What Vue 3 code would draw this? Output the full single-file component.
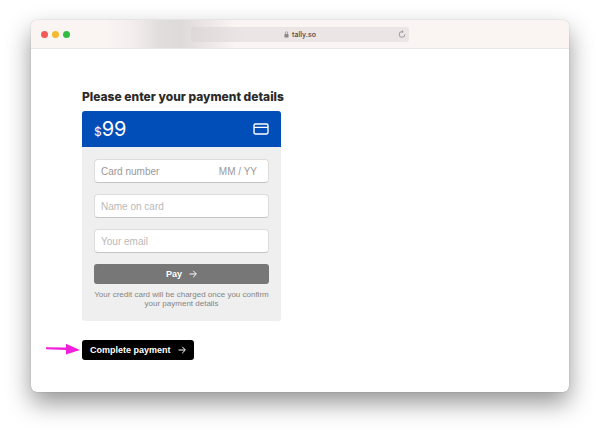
<template>
    <div class="desktop">
        <div class="window">
            <header class="titlebar">
                <div class="lights">
                    <span class="light red"></span>
                    <span class="light yellow"></span>
                    <span class="light green"></span>
                </div>
                <div class="address">
                    <div class="site">
                        <svg class="lock" viewBox="0 0 10 14">
                            <rect x="1" y="6" width="8" height="7" rx="1" fill="#8d8788" />
                            <path d="M2.8 6V3.6a2.2 2.2 0 0 1 4.4 0V6" fill="none" stroke="#8d8788" stroke-width="1.4" />
                        </svg>
                        <span>tally.so</span>
                    </div>
                    <button class="reload" type="button" aria-label="Reload">
                        <svg viewBox="0 0 14 14" fill="none" stroke="#8d8788" stroke-width="1.4">
                            <path d="M12 7.5A5 5 0 1 1 7 2.8h1.6" />
                            <path d="M6.6 0.6L9 2.8L6.6 5" />
                        </svg>
                    </button>
                </div>
            </header>
            <main class="page">
                <h1>Please enter your payment details</h1>
                <form @submit.prevent>
                    <section class="card">
                        <div class="card-head">
                            <div class="price"><span class="currency">$</span>{{ price }}</div>
                            <svg class="card-icon" viewBox="0 0 16 12" fill="none" stroke="#fff" stroke-width="1.4">
                                <rect x="1" y="1" width="14" height="10" rx="1.4" />
                                <path d="M1 4.4h14" />
                            </svg>
                        </div>
                        <div class="card-body">
                            <div class="field number">
                                <input class="digits" v-model="number" placeholder="Card number" aria-label="Card number">
                                <input class="expiry" v-model="expiry" placeholder="MM / YY" aria-label="Expiry date">
                            </div>
                            <div class="field">
                                <input v-model="name" placeholder="Name on card" aria-label="Name on card">
                            </div>
                            <div class="field">
                                <input v-model="email" type="email" placeholder="Your email" aria-label="Your email">
                            </div>
                            <button class="btn pay" type="button">
                                Pay
                                <svg class="arrow" viewBox="0 0 8 8"><path d="M0.5 4h6.6M4.2 0.8L7.4 4L4.2 7.2" /></svg>
                            </button>
                            <p class="note">Your credit card will be charged once you confirm your payment details</p>
                        </div>
                    </section>
                    <div class="complete">
                        <svg class="pointer" viewBox="0 0 34 12">
                            <path d="M0 4.2L20 4.6V0.8L34 7L20 11.4V7L0 6.2Z" fill="#f01fdc" />
                        </svg>
                        <button class="btn submit" type="submit">
                            Complete payment
                            <svg class="arrow" viewBox="0 0 8 8"><path d="M0.5 4h6.6M4.2 0.8L7.4 4L4.2 7.2" /></svg>
                        </button>
                    </div>
                </form>
            </main>
        </div>
    </div>
</template>

<script setup>
    import { ref } from 'vue';

    const price = ref(99);
    const number = ref('');
    const expiry = ref('');
    const name = ref('');
    const email = ref('');
</script>

<style>
    body {
        background-color: #fff;
    }
</style>

<style scoped>
    * {
        box-sizing: border-box;
        font-family: Inter, "Liberation Sans", sans-serif;
    }

    .desktop {
        display: flex;
        min-height: 100vh;
        padding: 20px 31px 40px;
        overflow: hidden;
    }

    .window {
        flex: 1;
        border-radius: 6px;
        background-color: #fff;
        box-shadow: 0 0 1px rgba(0, 0, 0, 0.4), 0 11px 24px rgba(0, 0, 0, 0.42);
    }

    .titlebar {
        display: grid;
        grid-template-columns: 1fr 2fr 1fr;
        align-items: center;
        height: 29px;
        padding: 0 10px;
        border-bottom: 1px solid #ebe6e6;
        border-radius: 6px 6px 0 0;
        background: linear-gradient(90deg, #faf4f3 14%, #f3eeed 19%, #e2dddd 24%, #dfdada 28%, #eae5e4 32%, #faf4f3 38%);
    }

    .lights {
        display: flex;
        gap: 4px;
    }

    .light {
        width: 7px;
        height: 7px;
        border-radius: 50%;
    }

    .red {
        background-color: #f25a57;
    }

    .yellow {
        background-color: #f5b92e;
    }

    .green {
        background-color: #2fbe41;
    }

    .address {
        display: flex;
        align-items: center;
        justify-self: center;
        width: 84%;
        height: 15px;
        padding: 0 3px 0 11px;
        border-radius: 3px;
        background: linear-gradient(90deg, #ded8d8, #ece5e5 24%);
    }

    .site {
        display: flex;
        flex: 1;
        align-items: center;
        justify-content: center;
        gap: 3px;
        color: #4b4647;
        font-size: 7px;
        font-weight: 500;
    }

    .lock {
        width: 5px;
        height: 7px;
    }

    .reload {
        display: flex;
        padding: 0;
        border: 0;
        background: none;
    }

    .reload svg {
        width: 8px;
        height: 8px;
    }

    .page {
        padding: 40px 51px 32px;
    }

    h1 {
        margin: 0 0 6px;
        color: #2b2a29;
        font-size: 12px;
        font-weight: 800;
        line-height: 16px;
    }

    .card {
        width: 199px;
        overflow: hidden;
        border-radius: 3px;
        background-color: #efefef;
    }

    .card-head {
        display: flex;
        align-items: center;
        justify-content: space-between;
        height: 36px;
        padding: 0 12px;
        background-color: #024eb9;
    }

    .price {
        padding-top: 2px;
        color: #fff;
        font-size: 20px;
        line-height: 24px;
    }

    .currency {
        font-size: 12px;
    }

    .card-icon {
        width: 16px;
        height: 12px;
    }

    .card-body {
        display: flex;
        flex-direction: column;
        gap: 11px;
        padding: 12px 12px 13px;
    }

    .field {
        display: flex;
        height: 24px;
        padding: 0 6px;
        border: 1px solid #dcdcdc;
        border-bottom-color: #c4c4c4;
        border-radius: 4px;
        background-color: #fff;
    }

    .field input {
        flex: 1;
        min-width: 0;
        padding: 0;
        border: 0;
        outline: 0;
        background: none;
        font-family: "Liberation Sans", sans-serif;
        font-size: 10px;
    }

    .field input::placeholder {
        color: #b9b9b9;
    }

    .number {
        padding-right: 11px;
    }

    .number input::placeholder {
        color: #999;
    }

    .number .expiry {
        flex: none;
        width: 40px;
        text-align: right;
    }

    .btn {
        display: flex;
        align-items: center;
        justify-content: center;
        gap: 7px;
        height: 20px;
        padding: 0 8px;
        border: 0;
        border-radius: 3px;
        color: #fff;
        font-family: "Liberation Sans", sans-serif;
        font-size: 9px;
        font-weight: 700;
    }

    .arrow {
        width: 8px;
        height: 8px;
        fill: none;
        stroke: #fff;
    }

    .pay {
        background-color: #777;
    }

    .submit {
        background-color: #000;
    }

    .note {
        margin: -5px 0 0;
        color: #858585;
        font-family: "Liberation Sans", sans-serif;
        font-size: 8px;
        line-height: 9px;
        text-align: center;
    }

    .complete {
        position: relative;
        margin-top: 19px;
    }

    /* callout arrow sits in the page gutter, left of the button */
    .pointer {
        position: absolute;
        top: 3px;
        left: -36px;
        width: 34px;
        height: 12px;
    }
</style>
